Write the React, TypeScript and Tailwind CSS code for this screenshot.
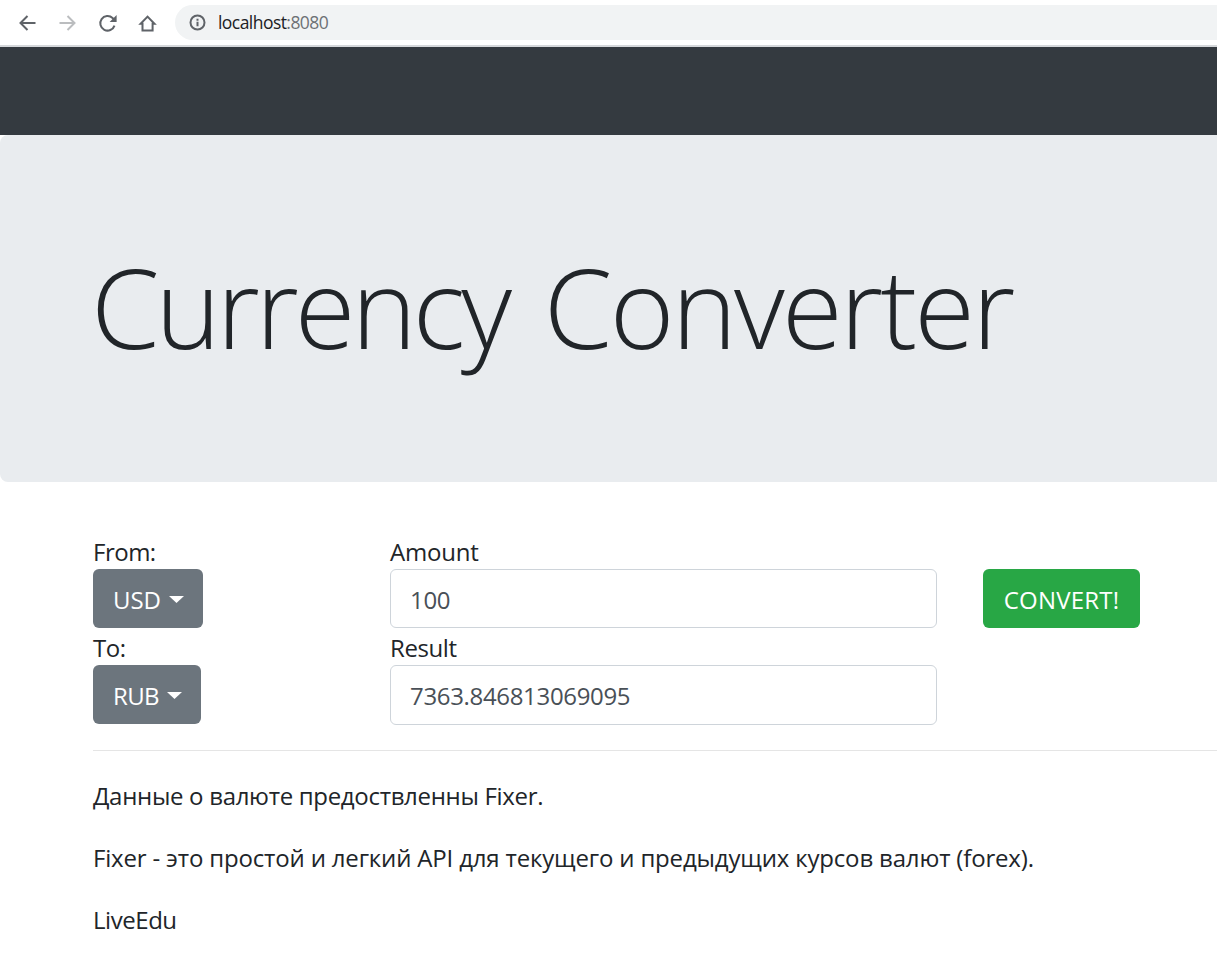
function Toolbar() {
  return (
    <header className="flex h-[47px] w-full shrink-0 items-start border-b-2 border-[#d5d8db] bg-white pt-[5px]">
      <div className="flex h-[35px] items-center pl-[17px]">
        <svg className="mr-5 size-5" viewBox="0 0 20 20" fill="none" stroke="#5f6368" strokeWidth="2">
          <path d="M18.5 10H4M10.5 3 3.5 10l7 7" />
        </svg>
        <svg className="mr-5 size-5" viewBox="0 0 20 20" fill="none" stroke="#bbbdbf" strokeWidth="2">
          <path d="M2.5 10H17M10.5 3l7 7-7 7" />
        </svg>
        <svg className="mr-5 size-5" viewBox="0 0 20 20" fill="none" stroke="#5f6368" strokeWidth="2">
          <path d="M17.5 12.6A7.3 7.3 0 1 1 15.6 5L17 6.6" />
          <path d="M19.6 2v7h-7z" fill="#5f6368" stroke="none" />
        </svg>
        <svg className="size-5" viewBox="0 0 20 20" fill="none" stroke="#5f6368" strokeWidth="2">
          <path d="M3.6 10.8h1.9v6.7h10.1v-6.7h1.9L10.55 3.6z" />
        </svg>
      </div>
      <div className="ml-[18px] flex h-[35px] flex-1 items-center rounded-l-full bg-[#f1f3f4] pl-[14px]">
        <svg className="size-[17px]" viewBox="0 0 17 17" fill="none" stroke="#5f6368" strokeWidth="2">
          <circle cx="8.5" cy="8.5" r="7" />
          <path d="M8.5 7.7v4.6M8.5 4.7v2" />
        </svg>
        <span className="ml-3 text-[17.5px] leading-[35px] tracking-[-0.55px] text-[#202124]">
          localhost<span className="text-[#6d7175]">:8080</span>
        </span>
      </div>
    </header>
  );
}

function CurrencyButton({ label, className }: { label: string; className: string }) {
  return (
    <button
      className={`flex h-[59px] items-center rounded-[6px] bg-[#6c757d] pt-px pl-[20px] text-white ${className}`}
    >
      <span>{label}</span>
      <svg className="ml-[8px] h-[7px] w-[15px]" viewBox="0 0 15 7" fill="currentColor">
        <path d="M0 0h15L7.5 7z" />
      </svg>
    </button>
  );
}

const fieldClass =
  'block w-[547px] rounded-[6px] border border-[#ced4da] bg-white pt-px pl-[19px] tracking-[-0.33px] text-[#495057] outline-none';

export default function App() {
  return (
    <div className="flex h-[960px] w-full flex-col overflow-hidden bg-white font-['Open_Sans','Noto_Sans',sans-serif] text-[24px] leading-[37px] text-[#212529]">
      <Toolbar />
      <nav className="h-[88px] shrink-0 bg-[#343a40]" />
      <section className="h-[347px] shrink-0 rounded-l-[8px] bg-[#e9ecef] pt-[96px] pl-[91px]">
        <h1 className="text-[110.5px] leading-[150px] font-light tracking-[-2.8px] whitespace-nowrap [word-spacing:10px]">
          <span className="tracking-[-4px]">Currency</span> Converter
        </h1>
      </section>
      <main className="pt-[50px] pl-[93px]">
        <div className="grid grid-cols-[297px_593px_1fr] items-start">
          <div>
            <div className="h-[37px] pt-px tracking-[-0.5px]">From:</div>
            <CurrencyButton label="USD" className="w-[110px] tracking-[-0.1px]" />
            <div className="h-[37px] pt-px tracking-[-0.4px]">To:</div>
            <CurrencyButton label="RUB" className="w-[108px] tracking-[-0.6px]" />
          </div>
          <div>
            <div className="h-[37px] pt-px tracking-[-0.2px]">Amount</div>
            <input className={`${fieldClass} h-[59px]`} defaultValue="100" />
            <div className="h-[37px] pt-px tracking-[-0.4px]">Result</div>
            <input className={`${fieldClass} h-[60px]`} defaultValue="7363.846813069095" />
          </div>
          <button className="mt-[37px] h-[59px] w-[157px] rounded-[6px] bg-[#28a745] pt-px tracking-[0.2px] text-white">
            CONVERT!
          </button>
        </div>
        <hr className="mt-[25px] border-[#e5e5e5]" />
        <div className="flex flex-col gap-[25px] pt-[26px] whitespace-nowrap">
          <p className="tracking-[-0.31px]">Данные о валюте предоствленны Fixer.</p>
          <p className="tracking-[-0.17px]">
            Fixer - это простой и легкий API для текущего и предыдущих курсов валют (forex).
          </p>
          <p className="tracking-[-0.45px]">LiveEdu</p>
        </div>
      </main>
    </div>
  );
}
